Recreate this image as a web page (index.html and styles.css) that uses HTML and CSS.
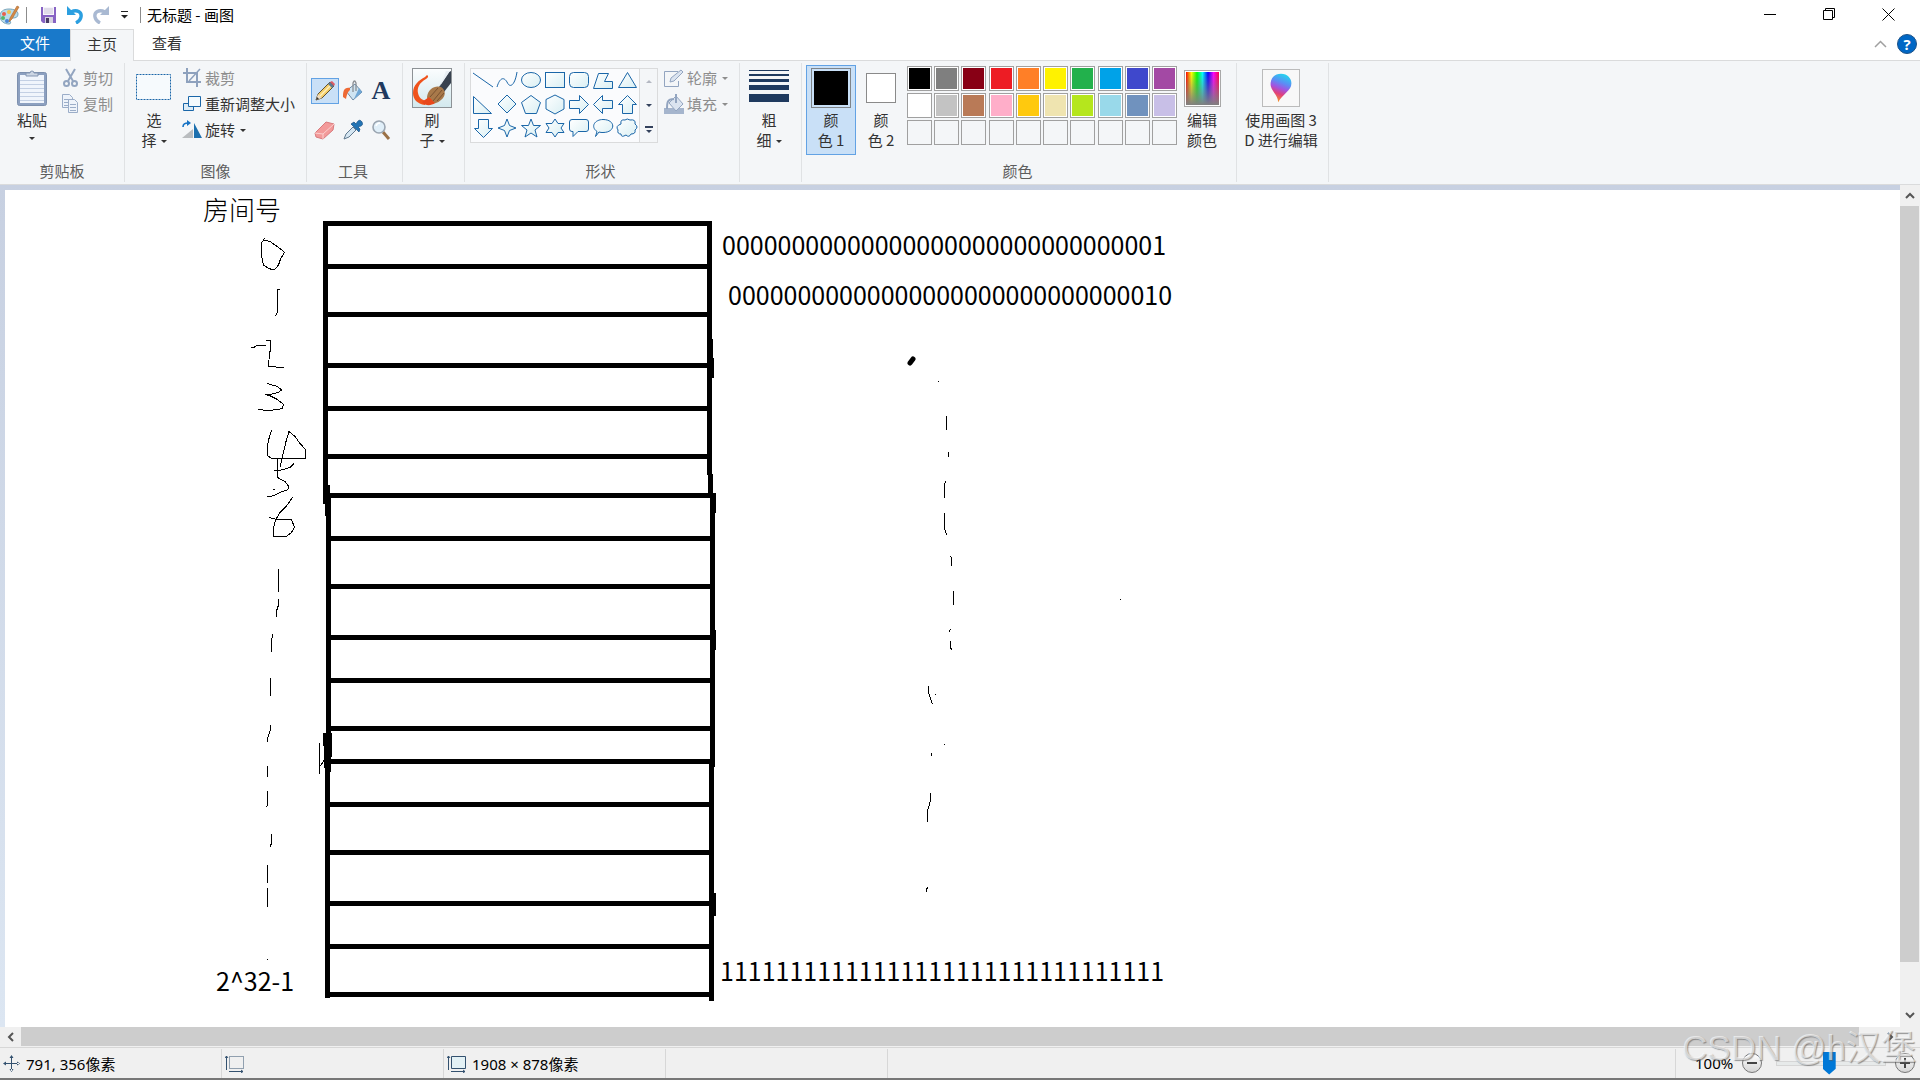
FILE: index.html
```html
<!DOCTYPE html>
<html lang="zh-CN">
<head>
<meta charset="UTF-8">
<meta name="viewport" content="width=device-width, initial-scale=1.0">
<title>无标题 - 画图</title>
<link rel="stylesheet" href="styles.css">
</head>
<body>

    <header class="titlebar">
        <svg class="app-icon" width="20" height="20" viewBox="0 0 20 20">
            <path d="M9 4C3 4 0 7 0 11c0 5 4 8 9 8 2 0 2-2 1-3-1-2 1-3 3-3 3 0 5-1 5-4 0-3-4-5-9-5z" fill="#b9dcea" stroke="#7ba6bb"/>
            <circle cx="4" cy="9" r="2" fill="#e8604c"/>
            <circle cx="9" cy="7" r="2" fill="#f2c14b"/>
            <circle cx="3" cy="13" r="2" fill="#55b56a"/>
            <circle cx="7" cy="16" r="2" fill="#4a86d8"/>
            <path d="M17 1l2 1-7 12-3 3 1-4z" fill="#d68a45" stroke="#a9672d" stroke-width=".6"/>
        </svg>
        <span class="divider"></span>
        <button class="quick" aria-label="保存">
            <svg width="18" height="18" viewBox="0 0 18 18">
                <path d="M1 1h15v16H3l-2-2z" fill="#8763c4"/>
                <path d="M3 1h11v8H3z" fill="#f7f5fb"/>
                <path d="M4 3h9M4 5h9M4 7h9" stroke="#c9c3d8"/>
                <path d="M5 11h8v6H5z" fill="#d7d3e0"/>
                <path d="M6 12h3v5H6z" fill="#4a3d66"/>
            </svg>
        </button>
        <button class="quick" aria-label="撤消">
            <svg width="18" height="18" viewBox="0 0 18 18">
                <path d="M5 6c6-3 11 0 10 5-.5 3-3 5-5 6" fill="none" stroke="#2b9fe0" stroke-width="3.4"/>
                <path d="M1 0v9h9z" fill="#2b9fe0"/>
            </svg>
        </button>
        <button class="quick" aria-label="重做">
            <svg width="18" height="18" viewBox="0 0 18 18">
                <path d="M13 6C7 3 2 6 3 11c.5 3 3 5 5 6" fill="none" stroke="#a9b9d2" stroke-width="3.4"/>
                <path d="M17 0v9H8z" fill="#a9b9d2"/>
            </svg>
        </button>
        <button class="quick narrow" aria-label="自定义快速访问工具栏">
            <svg width="8" height="8" viewBox="0 0 8 8"><path d="M0 .5h7" stroke="#222"/><path d="M0 4h7L3.500 7.500z" fill="#222"/></svg>
        </button>
        <span class="divider"></span>
        <h1>无标题 - 画图</h1>
        <div class="window-buttons">
            <button aria-label="最小化"><svg width="13" height="13" viewBox="0 0 13 13"><path d="M0 6h12v1H0z"/></svg></button>
            <button aria-label="还原"><svg width="13" height="13" viewBox="0 0 13 13" fill="none" stroke="#000"><path d="M.5 2.500h9v9h-9zM2.500 2.500v-2h9v9h-2"/></svg></button>
            <button aria-label="关闭"><svg width="13" height="13" viewBox="0 0 13 13" stroke="#000"><path d="M.5.5l12 12M12.500.5l-12 12"/></svg></button>
        </div>
    </header>

    <nav class="tabs">
        <button class="tab file">文件</button>
        <button class="tab active">主页</button>
        <button class="tab">查看</button>
        <div class="tab-tools">
            <button aria-label="最小化功能区"><svg width="13" height="8" viewBox="0 0 13 8"><path d="M1 7l5.500-5.500L12 7" fill="none" stroke="#a0a0a0" stroke-width="1.500"/></svg></button>
            <button class="help" aria-label="帮助">?</button>
        </div>
    </nav>

    <div class="ribbon">
        <section class="group clipboard">
            <div class="tools">
                <button class="big paste">
                    <span class="pic">
                        <svg width="32" height="38" viewBox="0 0 32 38">
                            <rect x="1.500" y="3.500" width="29" height="33" rx="2" fill="#8ca0c0" stroke="#7d90ae"/>
                            <path d="M4 6h24v28H4z" fill="#f0f5fc"/>
                            <path d="M4 11.500h24M4 15.500h24M4 19.500h24M4 23.500h24M4 27.500h24M4 31.500h24" stroke="#c3d0e4"/>
                            <path d="M10 7V4h4a2 2 0 0 1 4 0h4v3z" fill="#ccd6e4" stroke="#8496b2"/>
                        </svg>
                    </span>
                    <span>粘贴</span>
                    <span class="arrow"></span>
                </button>
                <div class="stack">
                    <button class="small" disabled>
                        <svg width="20" height="20" viewBox="0 0 20 20" fill="none" stroke="#93a5c0" stroke-width="2">
                            <path d="M6 1l7 12M15 1L8 13"/><circle cx="6.500" cy="15.500" r="2.500"/><circle cx="14.500" cy="15.500" r="2.500"/>
                        </svg>
                        剪切
                    </button>
                    <button class="small" disabled>
                        <svg width="20" height="20" viewBox="0 0 20 20" fill="#eef3fa" stroke="#9badc8">
                            <path d="M2.500.5h7l3 3v10h-10z"/><path d="M4 5.500h6M4 8.500h6M4 11.500h6"/>
                            <path d="M8.500 5.500h6l3 3v10h-9z"/><path d="M10 10.500h6M10 13.500h6M10 16.500h6"/>
                        </svg>
                        复制
                    </button>
                </div>
            </div>
            <h2>剪贴板</h2>
        </section>

        <section class="group image">
            <div class="tools">
                <button class="big select">
                    <span class="pic">
                        <svg width="36" height="28" viewBox="0 0 36 28"><rect x=".5" y=".5" width="34" height="25" fill="#f6fafd" stroke="#1a66a8" stroke-dasharray="2 1"/></svg>
                    </span>
                    <span>选</span>
                    <span>择<i class="arrow"></i></span>
                </button>
                <div class="stack">
                    <button class="small" disabled>
                        <svg width="20" height="20" viewBox="0 0 20 20" fill="none" stroke="#8ea1bd">
                            <path d="M5 0v14h14M1 5h14v14" stroke-width="2"/><path d="M7 13L18 1" stroke-width="1.500"/>
                        </svg>
                        裁剪
                    </button>
                    <button class="small">
                        <svg width="20" height="20" viewBox="0 0 20 20" stroke="#1a66a8">
                            <path d="M1.500 9.500h10v7h-10z" fill="#dcebf5"/><path d="M6.500 2.500h12v10h-12z" fill="#f4fafd"/>
                        </svg>
                        重新调整大小
                    </button>
                    <button class="small">
                        <svg width="20" height="20" viewBox="0 0 20 20">
                            <path d="M0 18h11V9z" fill="#b9bcbf"/><path d="M12 3v15h8z" fill="#1c6fae"/>
                            <path d="M1 7c0-3 2-4 5-4" fill="none" stroke="#1672c4" stroke-width="1.600"/><path d="M5 0l4 3-4 3z" fill="#1672c4"/>
                        </svg>
                        旋转<i class="arrow"></i>
                    </button>
                </div>
            </div>
            <h2>图像</h2>
        </section>

        <section class="group">
            <div class="toolbox">
                <button class="pressed" aria-label="铅笔">
                    <svg width="22" height="22" viewBox="0 0 22 22">
                        <path d="M2 20l2-6L16 2l4 4L8 18z" fill="#f4cf6a" stroke="#5f5136"/>
                        <path d="M6 16L17 5" stroke="#fdf0bd" stroke-width="1.500"/>
                        <path d="M14 4l2-2 4 4-2 2z" fill="#5d7a91"/><path d="M16 2l2-1 3 3-1 2z" fill="#dd5a66"/>
                        <path d="M2 20l2-6 4 4z" fill="#f0dcc0"/><path d="M2 20l1-3 2 2z" fill="#333"/>
                    </svg>
                </button>
                <button aria-label="用颜色填充">
                    <svg width="22" height="22" viewBox="0 0 22 22">
                        <path d="M4 11l9-7 7 8-9 8z" fill="#cfe4f2" stroke="#6d8aa6"/>
                        <path d="M12 19l8-7-3-4z" fill="#6fa7d6"/>
                        <path d="M11 12V3q1.500-4 3 0v8" fill="none" stroke="#8b8f94" stroke-width="1.300"/>
                        <path d="M8 8c-6-1-7 3-7 9l3 2c1-4 1-6 4-9z" fill="#ee6a35"/>
                    </svg>
                </button>
                <button class="letter" aria-label="文本">A</button>
                <button aria-label="橡皮擦">
                    <svg width="22" height="22" viewBox="0 0 22 22">
                        <path d="M1 14L12 3l8 2-1 6-10 9-7-2z" fill="#f39a9a" stroke="#d87a7d"/>
                        <path d="M1 14l8 1 11-10M9 15v5" fill="none" stroke="#fbd0cf"/>
                    </svg>
                </button>
                <button aria-label="颜色选取器">
                    <svg width="22" height="22" viewBox="0 0 22 22">
                        <path d="M2 20l2-5 7-7 3 3-7 7z" fill="#d5e6f2" stroke="#60798f"/>
                        <path d="M9 5l8 8 1-3-2-2c5-1 5-3 4-5-2-3-4-2-6 2l-2-2z" fill="#2374b4" stroke="#174f82" stroke-width=".7"/>
                    </svg>
                </button>
                <button aria-label="放大镜">
                    <svg width="22" height="22" viewBox="0 0 22 22">
                        <path d="M13 13l6 7" stroke="#9a7146" stroke-width="3"/>
                        <circle cx="9" cy="8" r="6" fill="#e0eff9" stroke="#9aa5b1" stroke-width="1.600"/>
                        <path d="M6 7q1-3 4-3" fill="none" stroke="#fff" stroke-width="1.500"/>
                    </svg>
                </button>
            </div>
            <h2>工具</h2>
        </section>

        <section class="group">
            <div class="tools center">
                <button class="big">
                    <span class="pic">
                        <svg width="40" height="40" viewBox="0 0 40 40">
                            <defs><linearGradient id="sky" x2="0" y2="1"><stop stop-color="#fbfdfe"/><stop offset="1" stop-color="#d3e9ee"/></linearGradient></defs>
                            <rect x=".5" y=".5" width="39" height="39" fill="url(#sky)" stroke="#8d9296"/>
                            <path d="M15 7c2 1 1 3-1 4C7 15 5 20 6 25c1 6 6 8 10 8l-3 4C5 36 1 31 1 25 1 17 7 12 13 9z" fill="#f0531c"/>
                            <path d="M27 19L37 4l2-1v12L32 24z" fill="#39424f"/><path d="M28 18L38 3h-4z" fill="#e9eff4"/>
                            <path d="M15 29c1-8 8-12 14-10 5 3 5 9 0 13-3 3-8 4-13 4 3-3-1-4-1-7z" fill="#a8794a"/>
                            <path d="M18 29l8-9M21 33l9-11M25 33l7-8" stroke="#7a5331"/>
                            <path d="M10 34l7-5 6 6c-4 3-10 3-13-1z" fill="#e8481b"/>
                        </svg>
                    </span>
                    <span>刷</span>
                    <span>子<i class="arrow"></i></span>
                </button>
            </div>
        </section>

        <section class="group shapes">
            <div class="tools">
                <div class="gallery">
                    <svg class="shape-list" width="168" height="72" viewBox="0 1 168 72">
                        <defs><linearGradient id="glass" x2="1" y2="1"><stop stop-color="#fff"/><stop offset="1" stop-color="#d9eff3"/></linearGradient></defs>
                        <g fill="none"><path d="M2 5l20 14"/><path d="M26 19c3-10 7-10 10-5 3 7 8 3 10-10"/></g>
                        <ellipse cx="60" cy="12" rx="9.500" ry="7.500"/>
                        <rect x="74.500" y="4.500" width="19" height="15"/>
                        <rect x="98.500" y="4.500" width="19" height="15" rx="4"/>
                        <path d="M122.500 20.500L127.500 5.500h10l-4 8h8v7z"/>
                        <path d="M147.500 19.500L156.500 4.500l9 15z"/>
                        <path d="M2.500 28.500v17h18z"/>
                        <path d="M36 27l9 9-9 9-9-9z"/>
                        <path d="M60 27.500l9.500 7-4 11h-11l-4-11z"/>
                        <path d="M84 27l9 4.500v9.500l-9 5-9-5v-9.500z"/>
                        <path d="M98.500 32.500h10v-5l9 9-9 9v-5h-10z"/>
                        <path d="M141.500 32.500h-10v-5l-9 9 9 9v-5h10z"/>
                        <path d="M151.500 45.500v-9h-4l9-9 9 9h-4v9z"/>
                        <path d="M7.500 51.500v9h-4l9 9 9-9h-4v-9z"/>
                        <path d="M36 51l2.500 6.500L45 60l-6.500 2.500L36 69l-2.500-6.500L27 60l6.500-2.500z"/>
                        <path d="M60 51l2.500 6.500h7l-5.500 4.500 2 7-6-4-6 4 2-7-5.500-4.500h7z"/>
                        <path d="M84 51l3 4.500h6l-3 4.500 3 4.500h-6L84 69l-3-4.500h-6l3-4.500-3-4.500h6z"/>
                        <path d="M101 51.500h14q2.500 0 2.500 2.500v7q0 2.500-2.500 2.500h-8l-5 5v-5h-1q-2.500 0-2.500-2.500v-7q0-2.500 2.500-2.500z"/>
                        <path d="M124.500 68.500l1.500-5c-7-5-2-12 6-12 13 0 13 13 0 13-1 0-3 0-4-.5z"/>
                        <path d="M150 56q-1-5 4-4 2-2 5 0 6-1 5 4 4 3 0 6 1 4-4 4-2 4-5 1-5 3-5-1-4 0-3-4-3-4 3-6z"/>
                    </svg>
                    <div class="gallery-scroll">
                        <button class="up" aria-label="向上" disabled><i class="arrow"></i></button>
                        <button aria-label="向下"><i class="arrow"></i></button>
                        <button class="more" aria-label="更多"><i class="arrow"></i></button>
                    </div>
                </div>
                <div class="stack">
                    <button class="small" disabled>
                        <svg width="20" height="20" viewBox="0 0 20 20" fill="none" stroke="#93a5c0">
                            <path d="M14 3.500H.5v15h14V13"/><path d="M6 14l1-4L17 2l2 2-9 9z" fill="#dbe4f0"/>
                        </svg>
                        轮廓<i class="arrow"></i>
                    </button>
                    <button class="small" disabled>
                        <svg width="20" height="20" viewBox="0 0 20 20">
                            <path d="M0 14h20v6H0z" fill="#a5b5cd"/><path d="M5 9l7-7 7 8-7 7z" fill="#dbe4f0" stroke="#93a5c0"/>
                            <path d="M3 15c0-6 0-10 7-10M12 0v9" fill="none" stroke="#93a5c0" stroke-width="2"/>
                        </svg>
                        填充<i class="arrow"></i>
                    </button>
                </div>
            </div>
            <h2>形状</h2>
        </section>

        <section class="group">
            <div class="tools center">
                <button class="big">
                    <span class="pic">
                        <svg width="40" height="36" viewBox="0 0 40 36" fill="#1f3a5f"><path d="M0 0h40v1H0zM0 4h40v2H0zM0 9h40v3H0zM0 15h40v5H0zM0 24h40v8H0z"/></svg>
                    </span>
                    <span>粗</span>
                    <span>细<i class="arrow"></i></span>
                </button>
            </div>
        </section>

        <section class="group colors">
            <div class="tools">
                <button class="big pressed">
                    <span class="pic"><i class="color-one"></i></span>
                    <span>颜</span>
                    <span>色 1</span>
                </button>
                <button class="big">
                    <span class="pic"><i class="color-two"></i></span>
                    <span>颜</span>
                    <span>色 2</span>
                </button>
                <div class="palette">
                    <button style="background:#000000" aria-label="黑色"></button>
                    <button style="background:#7f7f7f" aria-label="灰色-50%"></button>
                    <button style="background:#880015" aria-label="深红色"></button>
                    <button style="background:#ed1c24" aria-label="红色"></button>
                    <button style="background:#ff7f27" aria-label="橙色"></button>
                    <button style="background:#fff200" aria-label="黄色"></button>
                    <button style="background:#22b14c" aria-label="绿色"></button>
                    <button style="background:#00a2e8" aria-label="青绿"></button>
                    <button style="background:#3f48cc" aria-label="靛蓝"></button>
                    <button style="background:#a349a4" aria-label="紫色"></button>
                    <button style="background:#ffffff" aria-label="白色"></button>
                    <button style="background:#c3c3c3" aria-label="灰色-25%"></button>
                    <button style="background:#b97a57" aria-label="褐色"></button>
                    <button style="background:#ffaec9" aria-label="玫瑰色"></button>
                    <button style="background:#ffc90e" aria-label="金色"></button>
                    <button style="background:#efe4b0" aria-label="浅黄色"></button>
                    <button style="background:#b5e61d" aria-label="酸橙色"></button>
                    <button style="background:#99d9ea" aria-label="淡青绿色"></button>
                    <button style="background:#7092be" aria-label="蓝灰色"></button>
                    <button style="background:#c8bfe7" aria-label="淡紫色"></button>
                    <button class="empty" aria-label="自定义"></button>
                    <button class="empty" aria-label="自定义"></button>
                    <button class="empty" aria-label="自定义"></button>
                    <button class="empty" aria-label="自定义"></button>
                    <button class="empty" aria-label="自定义"></button>
                    <button class="empty" aria-label="自定义"></button>
                    <button class="empty" aria-label="自定义"></button>
                    <button class="empty" aria-label="自定义"></button>
                    <button class="empty" aria-label="自定义"></button>
                    <button class="empty" aria-label="自定义"></button>
                </div>
                <button class="big">
                    <span class="pic"><i class="rainbow"></i></span>
                    <span>编辑</span>
                    <span>颜色</span>
                </button>
            </div>
            <h2>颜色</h2>
        </section>

        <section class="group">
            <div class="tools center">
                <button class="big wide">
                    <span class="pic">
                        <svg class="framed" width="38" height="38" viewBox="0 0 38 38">
                            <defs>
                                <linearGradient id="drop" x1=".6" y1="0" x2=".3" y2="1">
                                    <stop stop-color="#25d3ee"/><stop offset=".3" stop-color="#5b8df5"/><stop offset=".5" stop-color="#a254e0"/>
                                    <stop offset=".7" stop-color="#e0407c"/><stop offset="1" stop-color="#f7a01c"/>
                                </linearGradient>
                            </defs>
                            <path d="M19 4c7 0 11 5 11 10 0 8-9 11-14 20 0-8-8-12-8-19C8 9 12 4 19 4z" fill="url(#drop)"/>
                        </svg>
                    </span>
                    <span>使用画图 3</span>
                    <span>D 进行编辑</span>
                </button>
            </div>
        </section>
    </div>

    <main class="workspace">
        <div class="viewport">
            <svg class="canvas" width="1908" height="878" viewBox="5 190 1908 878">
                <!-- memory cells -->
                <g class="thick">
                    <path d="M323 223.500H712M325 266.500H710M325 314.500H710M325 365.500H710M325 408.500H710M325 456.500H710"/>
                    <path d="M326 495.500H713M328 538.500H713M328 586.500H713M328 637.500H713M328 680.500H713M328 728.500H713"/>
                    <path d="M327 761.500H713M327 804.500H712M327 852.500H712M327 903.500H712M327 946.500H712M327 994.500H712"/>
                    <path d="M325.500 221V504M327.500 485V516M328.500 495V772M327.500 760V998"/>
                    <path d="M709.500 221V475M710.500 339V358M711.500 358V378M710.500 474V493M712.500 493V767M713.500 493V513M713.500 630V650M711.500 761V1001M713.500 893V916"/>
                    <path d="M325.500 733V746M329.500 733V757M326.500 745V768"/>
                </g>
                <!-- pen strokes, left column -->
                <g class="thin">
                    <path d="M264.500 238.500L261.500 243V256L263.500 265 268.500 268.500 272.500 269.500 275.500 269 278.500 265 280.500 259 284.500 252.500 280 248.500 270 241.500 264.500 240"/>
                    <path d="M280 289.500H277.500V312L275.500 316"/>
                    <path d="M251 347.500H254L256.500 345.500H266M266 340.500H270.500V350L269.500 353 268.500 366.500H275L277.500 367.500H284"/>
                    <path d="M267 383.500L277.500 386.500 281.500 390 278.500 392.500 272 394 265.500 394.500 269.500 395.500 277.500 399.500 283.500 404.500 282 408.500 278.500 409.500 268.500 410.500 258 409.500"/>
                    <path d="M271.500 430.500L269.500 436.500 267.500 445V455.500L271.500 458.500H305.500V449.500L300 443.500 295 436.500 289 431.500 286 441.500 280 467.500"/>
                    <path d="M277.500 458.500V477.500L285 481.500 288.500 486 288 489.500 280 492.500 272.500 496 267 496.500M274 470.500L281.500 470 290 467.500 294 463.500M273 489.500H275"/>
                    <path d="M292.500 497.500L286.500 506 280 512.500 275.500 520 273.500 527.500V536.500H286L291.500 532.500 294.500 527.500 291.500 519.500H277.500L269 517.500"/>
                    <path d="M278.500 569V592M278.500 599V605L276.500 611V617M272.500 634V638M271.500 638V652M270.500 678V696M270.500 725V730L267.500 738V742"/>
                    <path d="M267.500 766V777M267.500 791V805L266.500 807M271.500 834V842L270.500 847M267.500 865V883M267.500 888V907M267.500 959V960"/>
                    <path d="M319.500 743V774M320.500 766L324 760"/>
                </g>
                <!-- pen strokes, right column -->
                <g class="thin">
                    <path d="M938.500 381V382M946.500 416V430M948.500 452V457M945.500 481V483M944.500 483V498M944.500 513V528L946.500 535"/>
                    <path d="M950.500 556V557M951.500 557V566M953.500 591V605M1120.500 599V600M950.500 629V630M949.500 630V632M950.500 641V647L951.500 650"/>
                    <path d="M928.500 686V692L929.500 696 932.500 704M935.500 694V695M944.500 744V745M931.500 753V756"/>
                    <path d="M930.500 793V799L929.500 805 927.500 810V822M927.500 887V889M926.500 888V892"/>
                </g>
                <path class="blot" d="M910 363l3-4"/>
                <text class="title" x="203" y="220">房间号</text>
                <text x="722" y="255">00000000000000000000000000000001</text>
                <text x="728" y="305">00000000000000000000000000000010</text>
                <text x="720" y="981">11111111111111111111111111111111</text>
                <text x="216" y="991">2^32-1</text>
            </svg>
        </div>
        <div class="scroll vertical">
            <button aria-label="向上滚动"><svg width="10" height="8" viewBox="0 0 10 8"><path d="M1 6l4-4 4 4"/></svg></button>
            <span class="thumb"></span>
            <button aria-label="向下滚动"><svg width="10" height="8" viewBox="0 0 10 8"><path d="M1 2l4 4 4-4"/></svg></button>
        </div>
    </main>
    <div class="scroll horizontal">
        <button aria-label="向左滚动"><svg width="8" height="10" viewBox="0 0 8 10"><path d="M6 1L2 5l4 4"/></svg></button>
        <span class="thumb"></span>
        <button aria-label="向右滚动"><svg width="8" height="10" viewBox="0 0 8 10"><path d="M2 1l4 4-4 4"/></svg></button>
    </div>

    <footer class="status">
        <div class="cell">
            <svg width="18" height="18" viewBox="0 0 18 18" fill="#33516f"><path d="M8 2h1v14H8zM2 8h14v1H2zM8.500 0l2 3h-4zM8.500 17l2-3h-4zM0 8.500l3-2v4zM17 8.500l-3-2v4z"/></svg>
            791, 356像素
        </div>
        <div class="cell">
            <svg width="20" height="18" viewBox="0 0 20 18" fill="none" stroke="#33516f"><path d="M4.500 1.500h14v12h-14z" stroke-dasharray="1 1"/><path d="M1.500 1v14M4 16.500h14"/><path d="M0 3l1.500-2L3 3M16 15l2 1.500-2 1.500"/></svg>
        </div>
        <div class="cell">
            <svg width="20" height="18" viewBox="0 0 20 18" fill="none" stroke="#33516f"><path d="M4.500 1.500h14v12h-14z" fill="#e3f1f5"/><path d="M1.500 1v14M4 16.500h14"/><path d="M0 3l1.500-2L3 3M16 15l2 1.500-2 1.500"/></svg>
            1908 × 878像素
        </div>
        <div class="cell"></div>
        <div class="cell rest"></div>
        <div class="zoom">
            <label for="zoom">100%</label>
            <button aria-label="缩小"><svg width="20" height="20" viewBox="0 0 20 20"><path d="M5 10h10" stroke="#444" stroke-width="2"/></svg></button>
            <input type="range" id="zoom" min="0" max="100" value="48">
            <button aria-label="放大"><svg width="20" height="20" viewBox="0 0 20 20"><path d="M5 10h10M10 5v10" stroke="#444" stroke-width="2"/></svg></button>
        </div>
    </footer>

    <div class="watermark">CSDN @h汉堡</div>

</body>
</html>
```

FILE: styles.css
```css
:root {
    --ribbon: #f4f6f8;
    --line: #dadbdc;
    --blue: #1979ca;
    --pressed: #c9e0f7;
    --pressed-border: #62a2e4;
}
* {
    box-sizing: border-box;
}
body {
    margin: 0;
    height: 100vh;
    display: flex;
    flex-direction: column;
    overflow: hidden;
    position: relative;
    background: #fff;
    color: #333;
    font: 15px/20px "Noto Sans CJK SC", sans-serif;
}
button {
    margin: 0;
    padding: 0;
    border: 0;
    background: none;
    color: inherit;
    font: inherit;
}
svg {
    display: block;
    flex: none;
}
h1, h2 {
    margin: 0;
    font-size: 15px;
    font-weight: normal;
}

/* title bar */
.titlebar {
    display: flex;
    align-items: center;
    height: 29px;
    flex: none;
}
.titlebar h1 {
    color: #000;
    line-height: 28px;
}
.divider {
    width: 1px;
    height: 16px;
    margin: 0 6px;
    background: #8c8c8c;
}
.app-icon + .divider {
    margin-right: 9px;
}
.quick {
    width: 26px;
    height: 24px;
    display: flex;
    align-items: center;
    justify-content: center;
}
.narrow {
    width: 18px;
    margin-left: 2px;
}
.window-buttons {
    margin-left: auto;
    display: flex;
    height: 28px;
    padding-right: 2px;
}
.window-buttons button {
    width: 59px;
    display: flex;
    align-items: center;
    justify-content: center;
}

/* tabs */
.tabs {
    display: flex;
    flex: none;
    height: 32px;
    border-bottom: 1px solid var(--line);
}
.tab {
    width: 66px;
    height: 32px;
    padding-bottom: 4px;
}
.tab.file {
    width: 70px;
    height: 28px;
    padding: 0;
    background: var(--blue);
    color: #fff;
}
.tab.active {
    width: 64px;
    border: 1px solid var(--line);
    border-bottom: 0;
    background: var(--ribbon);
}
.tab-tools {
    margin-left: auto;
    display: flex;
    align-items: center;
    gap: 10px;
    padding: 0 3px 2px 0;
}
.help {
    width: 20px;
    height: 20px;
    border: 1px solid #1d5288;
    border-radius: 50%;
    background: #0067c5;
    color: #fff;
    font: bold 15px/18px "Open Sans", sans-serif;
}

/* ribbon */
.ribbon {
    display: flex;
    flex: none;
    height: 124px;
    padding: 2px 0;
    background: var(--ribbon);
    border-bottom: 1px solid var(--line);
}
.group {
    display: flex;
    flex-direction: column;
    width: 62px;
    padding: 2px 7px 1px 4px;
    border-right: 1px solid #e0e2e4;
}
.group h2 {
    margin-top: auto;
    text-align: center;
    color: #5d5d5d;
}
.group:nth-child(1) { width: 125px; padding-right: 4px; }
.group:nth-child(2) { width: 182px; padding-right: 4px; }
.group:nth-child(3) { width: 96px; }
.group:nth-child(5) { width: 275px; }
.group:nth-child(7) { width: 435px; }
.group:nth-child(8) { width: 92px; }
.tools {
    display: flex;
}
.center {
    justify-content: center;
}
.big {
    display: flex;
    flex: none;
    flex-direction: column;
    align-items: center;
    width: 50px;
    height: 90px;
    border: 1px solid transparent;
    white-space: nowrap;
}
.big.wide {
    width: 80px;
}
.pic {
    display: flex;
    align-items: center;
    justify-content: center;
    height: 44px;
}
.pressed {
    border: 1px solid var(--pressed-border);
    background: var(--pressed);
}
.arrow {
    display: inline-block;
    border: 3px solid transparent;
    border-top-color: currentColor;
    border-bottom: 0;
    vertical-align: middle;
    margin-left: 4px;
}
.paste .arrow {
    margin: 7px 0 0;
}
.small .arrow {
    margin-left: 2px;
}
.stack {
    display: flex;
    flex-direction: column;
}
.small {
    display: flex;
    align-items: center;
    gap: 3px;
    height: 26px;
    white-space: nowrap;
}
.small:disabled {
    color: #8d8d8d;
}
.clipboard .big {
    width: 56px;
}
.image .big {
    width: 50px;
}
.image .stack {
    padding-left: 3px;
}

/* tools */
.toolbox {
    display: grid;
    grid-template-columns: repeat(3, 28px);
    grid-auto-rows: 26px;
    row-gap: 13px;
    padding-top: 13px;
}
.toolbox button {
    display: flex;
    align-items: center;
    justify-content: center;
}
.letter {
    font: bold 26px/26px "Liberation Serif", serif;
    color: #1f3a5f;
}

/* shapes */
.shapes .tools {
    gap: 6px;
}
.gallery {
    display: flex;
    margin: 3px 0 0 1px;
    height: 75px;
    border: 1px solid var(--line);
    background: #fafbfd;
}
.shape-list {
    fill: url(#glass);
    stroke: #1a66a8;
}
.gallery-scroll {
    display: flex;
    flex-direction: column;
    width: 18px;
    border-left: 1px solid var(--line);
    background: var(--ribbon);
}
.gallery-scroll button {
    flex: 1;
    display: flex;
    align-items: center;
    justify-content: center;
    color: #33415c;
}
.gallery-scroll .arrow {
    margin: 0;
}
.gallery-scroll .up {
    color: #b4b8c2;
}
.up .arrow {
    border-top: 0;
    border-bottom: 3px solid currentColor;
}
.gallery-scroll .more {
    flex-direction: column;
    gap: 2px;
}
.more::before {
    content: "";
    width: 8px;
    height: 2px;
    background: currentColor;
}

/* colours */
.color-one {
    width: 40px;
    height: 40px;
    border: 1px solid #7f8488;
    outline: 2px solid #c9e0f7;
    outline-offset: -3px;
    background: #000;
}
.color-two {
    width: 30px;
    height: 30px;
    border: 1px solid #8a8a8a;
    background: #fff;
}
.palette {
    display: grid;
    flex: none;
    grid-template-columns: repeat(10, 25px);
    grid-auto-rows: 25px;
    justify-content: space-between;
    align-content: start;
    row-gap: 2px;
    width: 270px;
    margin: 1px 0 0 1px;
}
.palette button {
    border: 1px solid #a0a0a0;
    box-shadow: inset 0 0 0 1px #fff;
}
.palette .empty {
    box-shadow: none;
}
.rainbow {
    width: 37px;
    height: 37px;
    border: 2px solid #fff;
    outline: 1px solid #a8a8a8;
    outline-offset: -1px;
    background: linear-gradient(transparent, #808080), linear-gradient(90deg, #f00, #ff0, #0f0, #0ff, #00f, #f0f, #f04);
}
.framed {
    border: 1px solid #bbb;
    background: #f8f8f8;
}

/* drawing area */
.workspace {
    display: flex;
    flex: 1;
    min-height: 0;
}
.viewport {
    flex: 1;
    min-width: 0;
    overflow: hidden;
    padding: 5px 0 0 5px;
    background: linear-gradient(#c7d0e1, #dce6f2);
}
.canvas {
    background: #fff;
    font: 25px "Noto Sans CJK SC", sans-serif;
}
.canvas .title {
    font-size: 26px;
    font-weight: 300;
}
.thick, .thin {
    fill: none;
    stroke: #000;
    shape-rendering: crispEdges;
}
.thick {
    stroke-width: 5px;
}
.blot {
    stroke: #000;
    stroke-width: 5px;
    stroke-linecap: round;
}
.scroll {
    display: flex;
    flex: none;
    background: #f0f0f0;
}
.scroll button {
    display: flex;
    align-items: center;
    justify-content: center;
}
.scroll path {
    fill: none;
    stroke: #555;
    stroke-width: 2px;
}
.thumb {
    background: #cdcdcd;
}
.vertical {
    flex-direction: column;
    width: 20px;
    padding-right: 1px;
}
.vertical button {
    height: 21px;
}
.vertical .thumb {
    flex: 0 1 756px;
}
.vertical button:last-child {
    margin-top: auto;
    height: 24px;
}
.horizontal {
    height: 20px;
    padding-bottom: 1px;
}
.horizontal button {
    width: 21px;
}
.horizontal .thumb {
    flex: 1;
}
.horizontal button:last-child {
    width: 61px;
}

/* status bar */
.status {
    display: flex;
    flex: none;
    height: 33px;
    background: #f0f0f0;
    border-top: 1px solid #d7d7d7;
    border-bottom: 2px solid #777;
    color: #000;
    font-family: "Noto Sans", "Noto Sans CJK SC", sans-serif;
}
.cell {
    display: flex;
    align-items: center;
    gap: 5px;
    width: 222px;
    margin-top: 1px;
    padding-left: 3px;
    border-right: 1px solid #d7d7d7;
}
.rest {
    flex: 1;
}
.zoom {
    display: flex;
    align-items: center;
    width: 244px;
    padding: 0 5px 0 19px;
}
.zoom button {
    margin-left: 9px;
    border-radius: 50%;
    border: 1px solid #777;
    background: linear-gradient(#fff, #d5d5d5);
    width: 20px;
    height: 20px;
    display: flex;
    align-items: center;
    justify-content: center;
}
.zoom input {
    appearance: none;
    flex: 1;
    min-width: 0;
    height: 24px;
    margin: 0 0 0 14px;
    background: none;
}
.zoom input::-webkit-slider-runnable-track {
    height: 5px;
    border: 1px solid #d6d6d6;
    background: #e7eaea;
}
.zoom input::-webkit-slider-thumb {
    appearance: none;
    width: 13px;
    height: 23px;
    margin-top: -10px;
    background: #0078d7;
    clip-path: polygon(0 0, 100% 0, 100% 75%, 50% 100%, 0 75%);
}

.watermark {
    position: absolute;
    right: 4px;
    bottom: 8px;
    font: 35px/48px "Liberation Sans", "Noto Sans CJK SC", sans-serif;
    color: rgba(255, 255, 255, .6);
    text-shadow: 1px 1px 1px rgba(90, 90, 90, .6);
    pointer-events: none;
}
```
